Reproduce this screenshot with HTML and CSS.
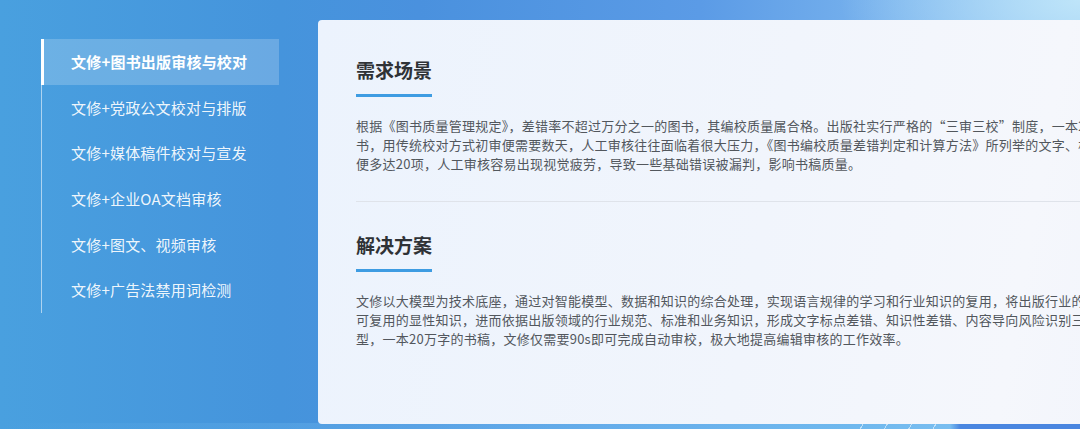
FILE: index.html
```html
<!DOCTYPE html>
<html lang="zh-CN">
<head>
<meta charset="utf-8">
<title>文修应用场景</title>
<link rel="stylesheet" href="styles.css">
</head>
<body>
<div class="page">
  <aside class="side">
    <ul class="nav">
      <li class="nav-item active">文修+图书出版审核与校对</li>
      <li class="nav-item">文修+党政公文校对与排版</li>
      <li class="nav-item">文修+媒体稿件校对与宣发</li>
      <li class="nav-item">文修+企业OA文档审核</li>
      <li class="nav-item">文修+图文、视频审核</li>
      <li class="nav-item">文修+广告法禁用词检测</li>
    </ul>
  </aside>
  <main class="card">
    <section class="block">
      <h2 class="title">需求场景</h2>
      <p class="text">根据《图书质量管理规定》，差错率不超过万分之一的图书，其编校质量属合格。出版社实行严格的“三审三校”制度，一本20万字的图<br>书，用传统校对方式初审便需要数天，人工审核往往面临着很大压力，《图书编校质量差错判定和计算方法》所列举的文字、标点、知识性等差错类型<br>便多达20项，人工审核容易出现视觉疲劳，导致一些基础错误被漏判，影响书稿质量。</p>
    </section>
    <div class="divider"></div>
    <section class="block">
      <h2 class="title">解决方案</h2>
      <p class="text">文修以大模型为技术底座，通过对智能模型、数据和知识的综合处理，实现语言规律的学习和行业知识的复用，将出版行业的隐性经验转化为<br>可复用的显性知识，进而依据出版领域的行业规范、标准和业务知识，形成文字标点差错、知识性差错、内容导向风险识别三大审校模<br>型，一本20万字的书稿，文修仅需要90s即可完成自动审校，极大地提高编辑审核的工作效率。</p>
    </section>
  </main>
</div>
</body>
</html>
```

FILE: styles.css
```css
* { box-sizing: border-box; }

html, body {
  margin: 0;
  padding: 0;
  width: 1080px;
  height: 429px;
  overflow: hidden;
}

body {
  font-family: "Noto Sans CJK SC", sans-serif;
  background:
    radial-gradient(ellipse 240px 110px at 1080px 0px, rgba(195, 232, 250, 0.9), rgba(195, 232, 250, 0) 100%),
    repeating-linear-gradient(120deg, rgba(255,255,255,0) 0 20px, rgba(255,255,255,0.55) 20px 21px) 840px 100% / 110px 6px no-repeat,
    linear-gradient(90deg, rgba(90,168,230,0) 0, rgba(110,185,238,0.9) 850px, rgba(120,190,240,0.9) 950px, rgba(74,134,224,1) 960px, #4a86e0 100%) 0 100% / 100% 6px no-repeat,
    linear-gradient(90deg, #49a0df 0px, #4594dc 280px, #4a91de 420px, #5b9be6 700px, #7ab4ee 900px, #92c6f2 1080px);
}

.page {
  display: flex;
  align-items: flex-start;
  padding-top: 20px;
  height: 429px;
}

.side {
  width: 318px;
  flex: none;
  padding: 19px 0 0 41px;
}

.nav {
  list-style: none;
  margin: 0;
  padding: 0;
  width: 238px;
  border-left: 1px solid rgba(255, 255, 255, 0.55);
}

.nav-item {
  position: relative;
  height: 45.6px;
  display: flex;
  align-items: center;
  padding-left: 29px;
  font-size: 15px;
  letter-spacing: 0.2px;
  color: rgba(255, 255, 255, 0.93);
  white-space: nowrap;
}

.nav-item.active {
  background: rgba(255, 255, 255, 0.2);
  color: #fff;
  font-weight: bold;
}

.nav-item.active::before {
  content: "";
  position: absolute;
  left: -1px;
  top: 0;
  bottom: 0;
  width: 3px;
  background: #fff;
}

.card {
  flex: none;
  width: 1000px;
  height: 404px;
  border-radius: 4px;
  padding: 37px 0 0 38px;
  background: linear-gradient(100deg, #ecf3fd 0%, #f1f5fc 45%, #f5f7fc 70%, #eef1fb 100%);
}

.title {
  display: inline-block;
  margin: 0;
  padding-bottom: 11px;
  border-bottom: 3px solid #3e9ce2;
  font-size: 19px;
  line-height: 26px;
  font-weight: bold;
  color: #2f3236;
}

.text {
  margin: 19px 0 0;
  font-size: 13px;
  line-height: 19px;
  letter-spacing: 0.25px;
  color: #52575d;
  white-space: nowrap;
}

.divider {
  width: 100%;
  height: 1px;
  background: #dfe3ea;
  margin: 28px 0 30px;
}
```
